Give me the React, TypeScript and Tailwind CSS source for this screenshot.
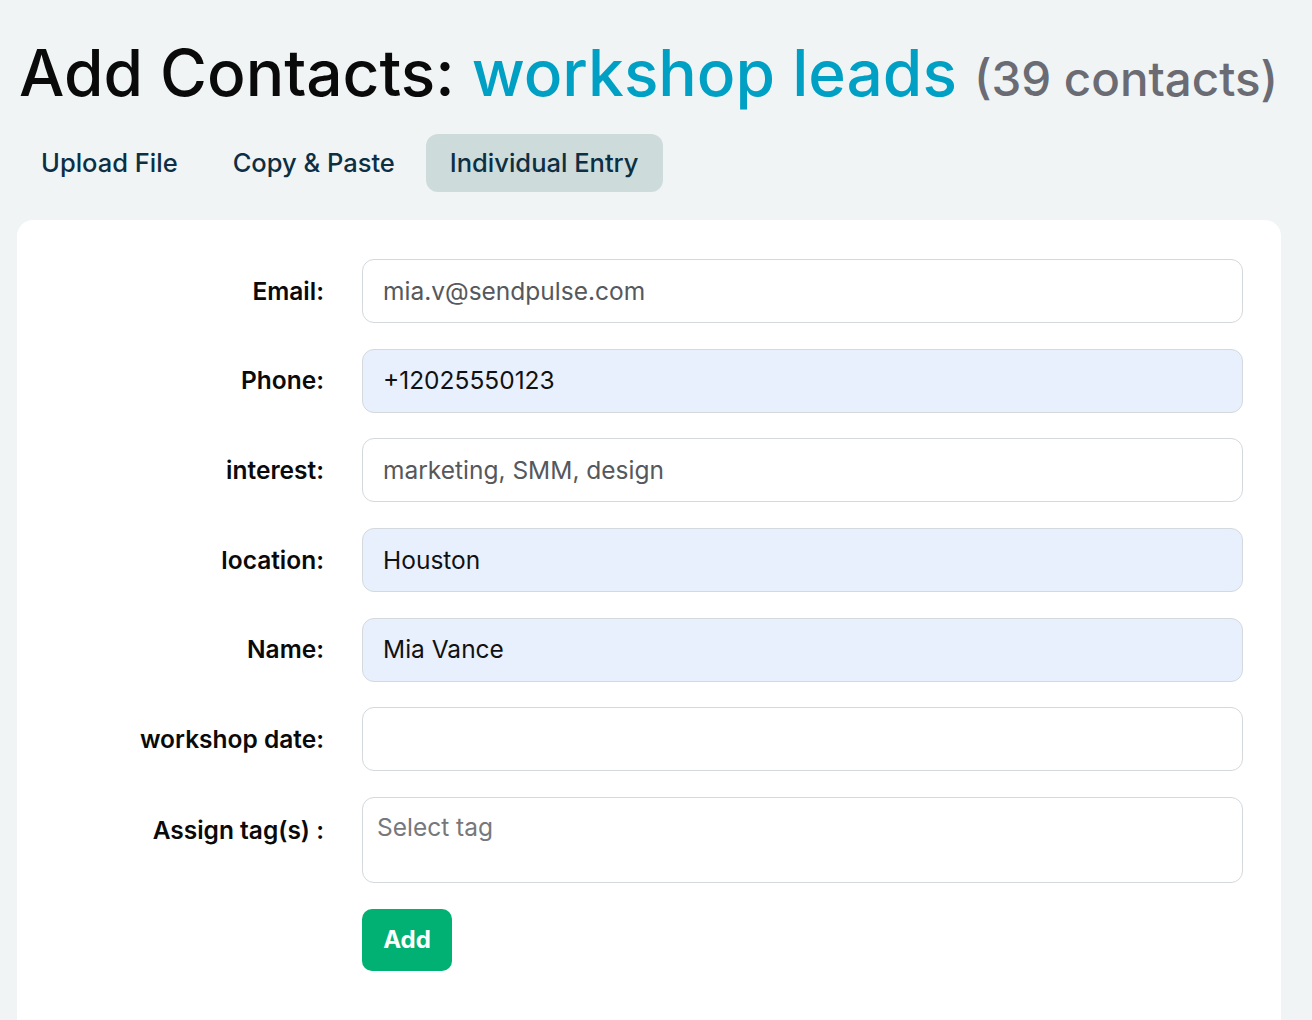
import React from 'react';

const tabs = ['Upload File', 'Copy & Paste', 'Individual Entry'];

type Field = { label: string; value: string; filled?: boolean };

const fields: Field[] = [
  { label: 'Email:', value: 'mia.v@sendpulse.com' },
  { label: 'Phone:', value: '+12025550123', filled: true },
  { label: 'interest:', value: 'marketing, SMM, design' },
  { label: 'location:', value: 'Houston', filled: true },
  { label: 'Name:', value: 'Mia Vance', filled: true },
  { label: 'workshop date:', value: '' },
];

export default function App() {
  return (
    <div className="min-h-[1020px] bg-[#f0f4f5] pl-[17px] pr-[31px] pt-[35px] font-['Inter',sans-serif]">
      <h1 className="whitespace-nowrap pl-[2px] text-[64px] font-medium leading-[76px] text-[#0a0a0a]">
        Add Contacts: <span className="text-[#00a0c4]">workshop leads</span>{' '}
        <span className="text-[47.5px] text-[#6b6b74]">(39 contacts)</span>
      </h1>

      <nav className="mt-[17px] flex items-center gap-[7px]">
        {tabs.map((tab, i) => (
          <button
            key={tab}
            type="button"
            className={
              i === 2
                ? 'h-[58px] rounded-[12px] bg-[#cedbdb] px-[24px] text-[25.5px] font-medium text-[#0c2f44]'
                : 'h-[58px] rounded-[12px] px-[24px] text-[25.5px] font-medium text-[#0c2f44]'
            }
          >
            {tab}
          </button>
        ))}
      </nav>

      <section className="mt-[28px] rounded-t-[16px] bg-white px-[38px] pb-[60px] pt-[39px]">
        <div className="flex flex-col gap-[25.7px]">
          {fields.map((f) => (
            <div key={f.label} className="flex items-center gap-[38px]">
              <label className="w-[269px] shrink-0 text-right text-[24.5px] font-semibold text-[#0a0a0a]">
                {f.label}
              </label>
              <div
                className={
                  f.filled
                    ? 'flex h-[64px] flex-1 items-center rounded-[12px] border border-[#d3d9dc] bg-[#e8f0fe] px-[20px] text-[24.5px] text-[#111]'
                    : 'flex h-[64px] flex-1 items-center rounded-[12px] border border-[#d3d9dc] bg-white px-[20px] text-[24.5px] text-[#55585c]'
                }
              >
                {f.value}
              </div>
            </div>
          ))}

          <div className="flex items-start gap-[38px]">
            <label className="w-[269px] shrink-0 pt-[15px] text-right text-[24.5px] font-semibold text-[#0a0a0a]">
              Assign tag(s) :
            </label>
            <div className="h-[86px] flex-1 rounded-[12px] border border-[#d3d9dc] bg-white px-[14px] pt-[11px] text-[24.5px] text-[#77787b]">
              Select tag
            </div>
          </div>

          <div className="flex gap-[38px]">
            <div className="w-[269px] shrink-0" />
            <button
              type="button"
              className="h-[62px] w-[90px] rounded-[10px] bg-[#00b173] text-[24px] font-bold text-white"
            >
              Add
            </button>
          </div>
        </div>
      </section>
    </div>
  );
}
